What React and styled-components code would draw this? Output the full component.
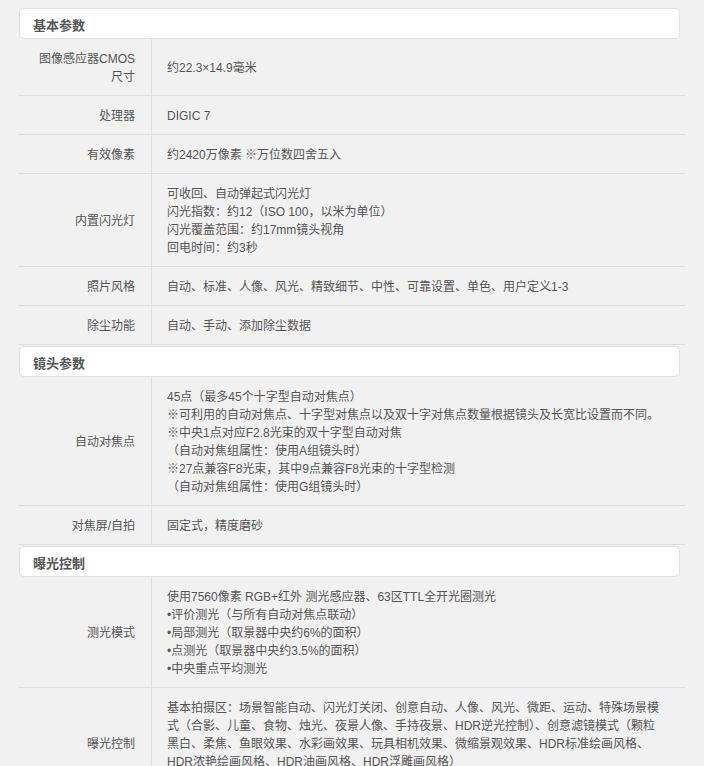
import React from "react";
import styled, { createGlobalStyle } from "styled-components";

const Global = createGlobalStyle`
  html, body { margin: 0; padding: 0; background: #f1f1f1; }
  body {
    font-family: "Liberation Sans", Arial, "Noto Sans CJK SC", sans-serif;
    font-size: 12px;
    color: #555;
  }
`;

const Page = styled.div`
  padding: 7px 19px 8px 18px;
  display: flex;
  flex-direction: column;
`;

const Section = styled.section`
  display: flex;
  flex-direction: column;
`;

const CardHeader = styled.h3`
  margin: 1px 5px 0 1px;
  height: 31px;
  box-sizing: border-box;
  background: #fff;
  border: 1px solid #e2e2e2;
  border-radius: 5px;
  display: flex;
  align-items: center;
  padding: 1px 0 0 13px;
  font-size: 13px;
  font-weight: bold;
  color: #555;
  font-family: "Liberation Sans", Arial, "Noto Sans CJK SC", sans-serif;
`;

const Table = styled.div`
  display: flex;
  flex-direction: column;
`;

const Row = styled.div`
  display: grid;
  grid-template-columns: 134px 1fr;
  border-bottom: 1px solid #dedede;
`;

const Label = styled.div`
  box-sizing: border-box;
  border-right: 1px solid #dedede;
  padding: 11px 16px 9px;
  display: flex;
  align-items: center;
  justify-content: flex-end;
  text-align: right;
  line-height: 18px;
  color: #555;
`;

const Value = styled.div`
  padding: 11px 16px 9px 15px;
  display: flex;
  flex-direction: column;
  justify-content: center;
  line-height: 18px;
  color: #555;
`;

const Line = styled.div`
  white-space: nowrap;
`;

const sections = [
  {
    title: "基本参数",
    rows: [
      ["图像感应器CMOS尺寸", ["约22.3×14.9毫米"]],
      ["处理器", ["DIGIC 7"]],
      ["有效像素", ["约2420万像素 ※万位数四舍五入"]],
      [
        "内置闪光灯",
        [
          "可收回、自动弹起式闪光灯",
          "闪光指数：约12（ISO 100，以米为单位）",
          "闪光覆盖范围：约17mm镜头视角",
          "回电时间：约3秒",
        ],
      ],
      ["照片风格", ["自动、标准、人像、风光、精致细节、中性、可靠设置、单色、用户定义1-3"]],
      ["除尘功能", ["自动、手动、添加除尘数据"]],
    ],
  },
  {
    title: "镜头参数",
    rows: [
      [
        "自动对焦点",
        [
          "45点（最多45个十字型自动对焦点）",
          "※可利用的自动对焦点、十字型对焦点以及双十字对焦点数量根据镜头及长宽比设置而不同。",
          "※中央1点对应F2.8光束的双十字型自动对焦",
          "（自动对焦组属性：使用A组镜头时）",
          "※27点兼容F8光束，其中9点兼容F8光束的十字型检测",
          "（自动对焦组属性：使用G组镜头时）",
        ],
      ],
      ["对焦屏/自拍", ["固定式，精度磨砂"]],
    ],
  },
  {
    title: "曝光控制",
    rows: [
      [
        "测光模式",
        [
          "使用7560像素 RGB+红外 测光感应器、63区TTL全开光圈测光",
          "•评价测光（与所有自动对焦点联动）",
          "•局部测光（取景器中央约6%的面积）",
          "•点测光（取景器中央约3.5%的面积）",
          "•中央重点平均测光",
        ],
      ],
      [
        "曝光控制",
        [
          "基本拍摄区：场景智能自动、闪光灯关闭、创意自动、人像、风光、微距、运动、特殊场景模",
          "式（合影、儿童、食物、烛光、夜景人像、手持夜景、HDR逆光控制）、创意滤镜模式（颗粒",
          "黑白、柔焦、鱼眼效果、水彩画效果、玩具相机效果、微缩景观效果、HDR标准绘画风格、",
          "HDR浓艳绘画风格、HDR油画风格、HDR浮雕画风格）",
          "创意拍摄区：程序自动曝光、快门优先自动曝光、光圈优先自动曝光、手动曝光、B门",
        ],
      ],
    ],
  },
];

export default function App() {
  return (
    <>
      <Global />
      <Page>
        {sections.map((s) => (
          <Section key={s.title}>
            <CardHeader>{s.title}</CardHeader>
            <Table>
              {s.rows.map(([label, lines]) => (
                <Row key={label}>
                  <Label>{label}</Label>
                  <Value>
                    {lines.map((l, i) => (
                      <Line key={i}>{l}</Line>
                    ))}
                  </Value>
                </Row>
              ))}
            </Table>
          </Section>
        ))}
      </Page>
    </>
  );
}
